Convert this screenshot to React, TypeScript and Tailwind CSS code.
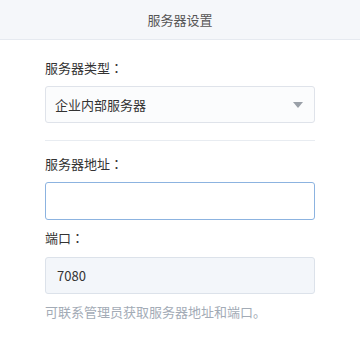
import React from "react";

function Colon() {
  return (
    <span style={{ fontFamily: '"Noto Sans CJK TC", "Noto Sans CJK SC", sans-serif' }}>：</span>
  );
}

export default function App() {
  return (
    <div
      className="w-[360px] h-[360px] bg-white text-[13px] text-[#333]"
      style={{ fontFamily: '"Noto Sans CJK SC", "Noto Sans", sans-serif' }}
    >
      <div className="h-[40px] bg-[#f5f7fa] border-b border-[#e6eaf0] flex items-center justify-center text-[#555]">
        服务器设置
      </div>
      <div className="px-[45px]">
        <div className="mt-[18px] h-[20px] leading-[20px]">
          服务器类型<Colon />
        </div>
        <div className="mt-[8px] h-[37px] border border-[#dfe3ea] rounded-[3px] bg-[#fbfcfd] flex items-center justify-between pl-[9px] pr-[11px]">
          <span>企业内部服务器</span>
          <svg width="10" height="6" viewBox="0 0 10 6">
            <path d="M0 0 L10 0 L5 6 Z" fill="#9aa0a8" />
          </svg>
        </div>
        <div className="mt-[17px] h-px bg-[#e8ecf1]" />
        <div className="mt-[13px] h-[20px] leading-[20px]">
          服务器地址<Colon />
        </div>
        <div className="mt-[8px] h-[38px] border border-[#8cb3e0] rounded-[3px] bg-white" />
        <div className="mt-[8px] h-[20px] leading-[20px]">
          端口<Colon />
        </div>
        <div className="mt-[9px] h-[37px] border border-[#dce2ea] rounded-[3px] bg-[#f3f6fa] flex items-center pl-[11px]">
          7080
        </div>
        <div className="mt-[8px] h-[20px] leading-[20px] text-[#a3abb6]">
          可联系管理员获取服务器地址和端口。
        </div>
      </div>
    </div>
  );
}
